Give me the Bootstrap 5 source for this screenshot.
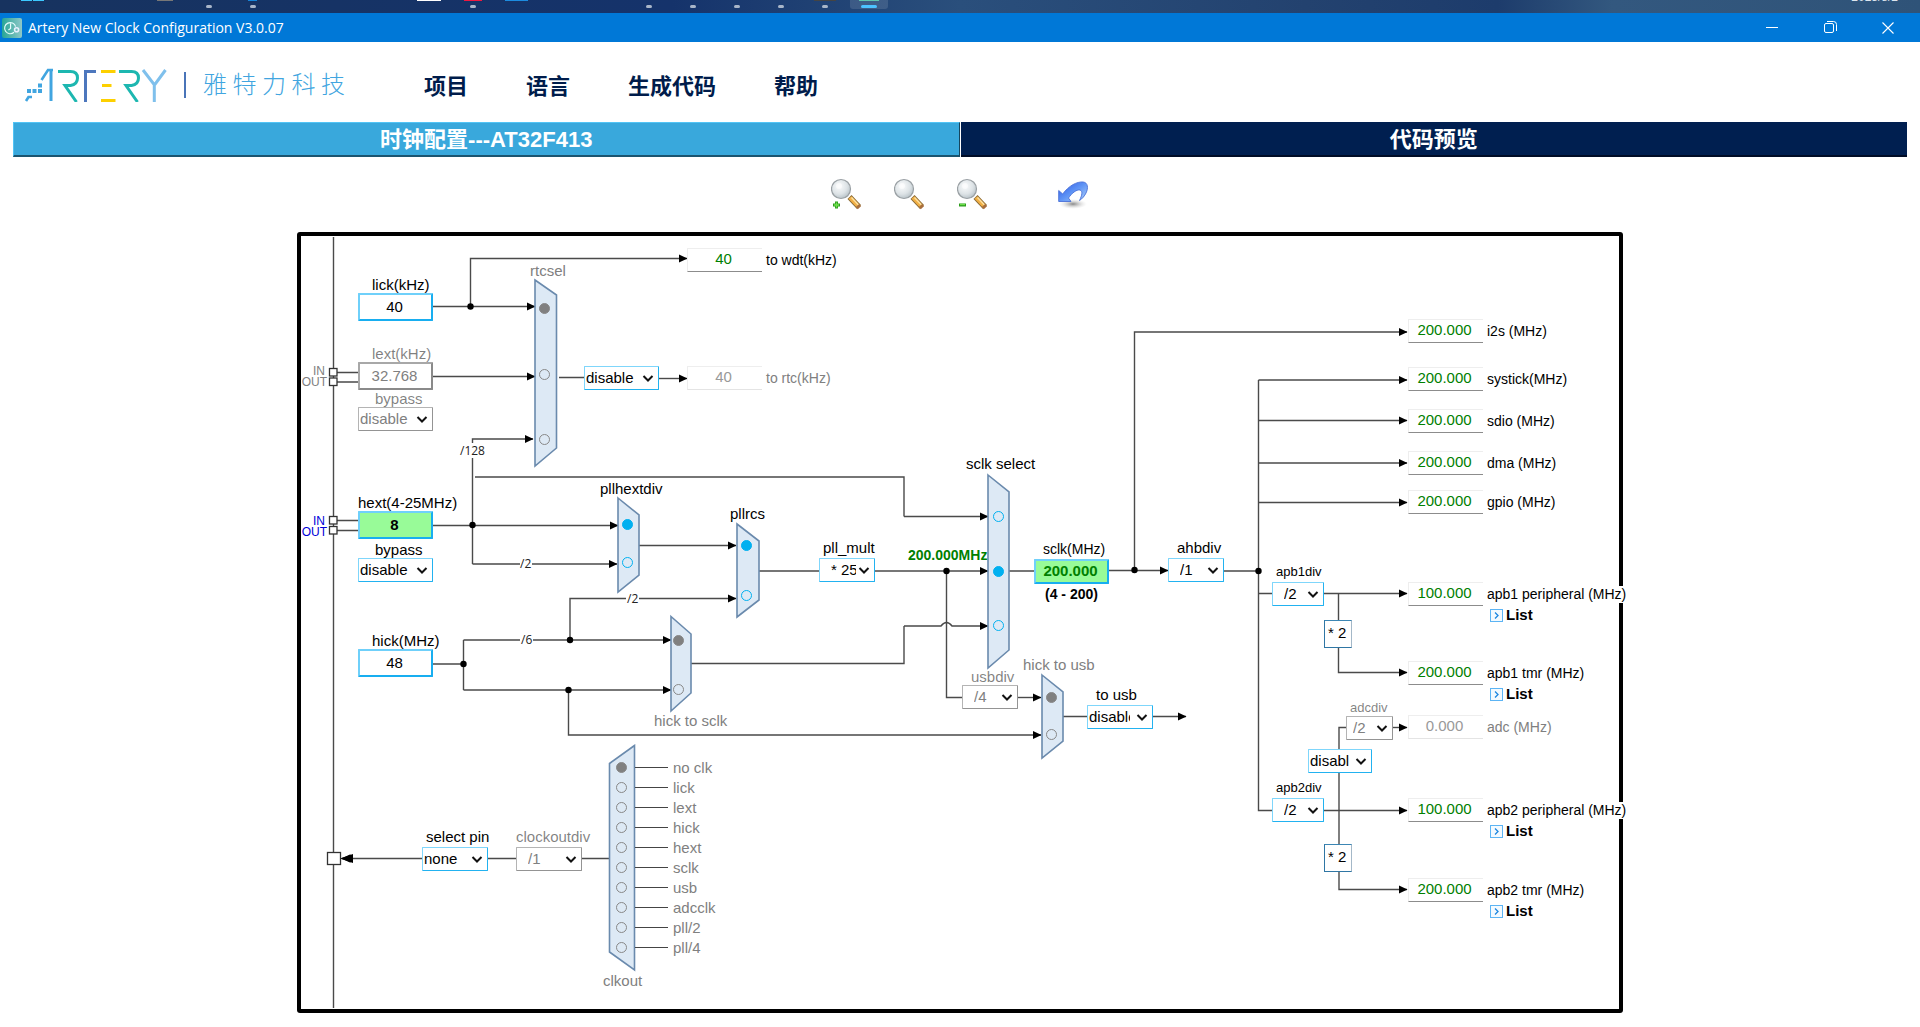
<!DOCTYPE html>
<html lang="zh-CN">
<head>
<meta charset="utf-8">
<meta name="viewport" content="width=device-width, initial-scale=1">
<title>Artery New Clock Configuration V3.0.07</title>
<link href="https://cdn.jsdelivr.net/npm/bootstrap@5.3.0/dist/css/bootstrap.min.css" rel="stylesheet">
<style>
  body { font-family: "Liberation Sans", "Noto Sans CJK SC", sans-serif; font-size: 15px; color: #000; background: #fff; }

  /* desktop strip and title bar */
  .desk-strip { height: 13px; background: linear-gradient(90deg, #17335f 0, #15336b 35%, #2a4f7c 50%, #23426f 68%, #1d3c6c 78%, #33587f 84%, #2f5378 100%); }
  .desk-date { font-size: 12px; line-height: 12px; margin-top: -9px; padding-right: 22px; color: #dde5ee; }
  .title-strip { height: 29px; background: #0078d7; color: #fff; padding: 0 3px 0 2px; }
  .title-text { font-family: "Open Sans", sans-serif; font-size: 14px; line-height: 20px; padding-left: 6px; }
  .win-btn { width: 58px; height: 29px; color: #fff; }

  /* menu */
  .menu-strip { height: 80px; padding: 6px 24px 0; }
  .brand-rule { width: 2px; height: 26px; background: #4a74b8; margin: 0 17px 0 16px; }
  .brand-name { width: 142px; font-size: 24px; line-height: 30px; font-weight: 300; color: #41a5e0; text-align-last: justify; }
  .menu-link { font-size: 22px; line-height: 32px; font-weight: 700; color: #001c4b; text-decoration: none; }
  .menu-list { gap: 58px; margin-left: 79px; padding-top: 4px; }

  /* tabs */
  .tab-strip { padding: 0 13px; gap: 1px; }
  .tab-btn { height: 35px; padding: 2px 0 0; font-size: 22px; line-height: 30px; font-weight: 700; color: #fff; border: 0; }
  .tab-on { background: #39a8dc; border-top: 1px solid #52c4f5; border-left: 1px solid #52c4f5; border-right: 1px solid #16465e; border-bottom: 2px solid #1b5570; }
  .tab-off { background: #001f50; border-bottom: 2px solid #000c26; }

  .tool-strip { height: 75px; gap: 33px; padding: 0 2px 2px 0; }
  .tool-btn { width: 30px; height: 32px; }
  .tool-undo { margin-left: 38px; }

  /* clock tree canvas */
  .clock-tree { width: 1326px; height: 781px; box-shadow: inset 0 0 0 4px #000; border-radius: 3px; }
  .wire { fill: none; stroke: #4a4a4a; stroke-width: 1.4; }
  .mux { fill: #dde9f5; stroke: #6a8aad; stroke-width: 1.6; }
  .pad-box { fill: #fff; stroke: #333; stroke-width: 1.3; }
  .cap { font-size: 15px; }
  .cap-off { fill: #808080; }
  .cap-pin { font-size: 12px; }
  .cap-ratio { font-family: "Open Sans", sans-serif; font-size: 12px; fill: #222; }
  .cap-freq { font-size: 14px; font-weight: 700; fill: #008000; }

  .node { position: absolute; display: flex; flex-direction: column; }
  .node > label { line-height: 20px; white-space: nowrap; }
  .node.tight > label { line-height: 16px; }
  .in-4 { padding-left: 4px; }
  .in-9 { padding-left: 9px; }
  .in-14 { padding-left: 14px; }
  .in-17 { padding-left: 17px; }
  .small-cap { font-size: 13px; }
  .mid-cap { font-size: 14px; }
  .w-a { width: 75px; } .w-b { width: 66px; } .w-c { width: 56px; } .w-d { width: 52px; } .w-e { width: 47px; } .w-f { width: 64px; }

  .freq-in { height: 28px; width: 75px; padding: 0 2px 2px 0; font-size: 15px; line-height: 20px; text-align: center; color: #000; background: #fff; border: 2px solid; border-color: #6fd0fa #18aef0 #18aef0 #6fd0fa; border-radius: 1px; }
  .freq-in.low { height: 25px; }
  .freq-in.lit { background: #98fb98; font-weight: 700; }
  .freq-in.off { color: #808080; border-color: #a8a8a8 #8a8a8a #8a8a8a #a8a8a8; }
  .freq-in.green { color: #008000; }

  .pick.form-select { height: 24px; width: 100%; padding: 0 22px 1px 1px; font-size: 15px; line-height: 20px; color: #000; text-overflow: clip; border: 1px solid; border-color: #7fd6fb #22b2f0 #22b2f0 #7fd6fb; border-radius: 1px; background-color: #fff; background-image: url("data:image/svg+xml,%3Csvg xmlns='http://www.w3.org/2000/svg' viewBox='0 0 12 12'%3E%3Cpath fill='none' stroke='%23111' stroke-width='2' d='M1.5 4l4.5 4.5L10.5 4'/%3E%3C/svg%3E"); background-repeat: no-repeat; background-position: right 4px center; background-size: 12px 12px; }
  .pick.form-select.pad-m { padding-left: 11px; padding-right: 18px; }
  .pick.form-select.pad-s { padding-left: 6px; padding-right: 18px; }
  .pick.form-select.off { color: #808080; border-color: #b4b4b4 #949494 #949494 #b4b4b4; opacity: 1; }

  .out-row { gap: 4px; }
  .out-val { width: 75px; height: 24px; padding: 0 3px 3px 0; font-size: 15px; line-height: 20px; text-align: center; color: #008000; background: #fff; border: 1px solid #eee; border-right: 0; border-bottom-color: #8c8c8c; border-radius: 0; }
  .out-name { font-size: 14px; line-height: 16px; padding-bottom: 1px; background: #fff; white-space: nowrap; }
  .out-off .out-val { color: #999; border-bottom-color: #e4e4e4; }
  .out-off .out-name { color: #808080; }
  .list-btn { height: 18px; margin-left: 82px; gap: 3px; font-size: 15px; line-height: 18px; font-weight: 700; color: #000; }

  .mult-box { width: 28px; height: 28px; font-size: 15px; line-height: 24px; padding-left: 3px; background: #fff; border: 1px solid; border-color: #3c86b4 #a4b8c8 #2f76a4 #2f76a4; white-space: nowrap; }

  .sel-dot { appearance: none; width: 11px; height: 11px; margin: 0; border: 1px solid #888; border-radius: 50%; background: transparent; flex: none; }
  .sel-dot:checked { background: #808080; }
  .sel-dot.hot { border-color: #00b0f0; }
  .sel-dot.hot:checked { background: #00b0f0; }
  .dot-stack { position: absolute; display: flex; flex-direction: column; justify-content: space-between; }

  .clk-list { left: 319px; top: 526px; }
  .clk-list label { display: flex; align-items: center; height: 20px; line-height: 18px; padding-bottom: 1px; color: #808080; }
  .clk-list .stub { width: 33px; height: 1px; margin: 0 5px 0 8px; background: #444; }

  /* places on the canvas */
  #n-lick { left: 61px; top: 45px; }
  #n-lext { left: 61px; top: 114px; }
  #n-lextby { left: 61px; top: 159px; }
  #n-hext { left: 61px; top: 263px; }
  #n-hextby { left: 61px; top: 310px; }
  #n-hick { left: 61px; top: 401px; }
  #n-rtc { left: 287px; top: 134px; }
  #n-mult { left: 522px; top: 306px; }
  #n-sclk { left: 737px; top: 307px; }
  #n-ahb { left: 871px; top: 306px; }
  #n-usb { left: 665px; top: 437px; }
  #n-tousb { left: 790px; top: 453px; }
  #n-pin { left: 125px; top: 595px; }
  #n-cko { left: 219px; top: 595px; }
  #n-apb1 { left: 975px; top: 330px; }
  #n-apb2 { left: 975px; top: 546px; }
  #n-adc { left: 1049px; top: 468px; }
  #n-adcen { left: 1011px; top: 517px; }
  #n-x1 { left: 1027px; top: 388px; }
  #n-x2 { left: 1027px; top: 612px; }
  #o-wdt { left: 390px; top: 16px; }
  #o-rtc { left: 390px; top: 134px; }
  #o-i2s, #o-sys, #o-sdio, #o-dma, #o-gpio, #o-p1, #o-t1, #o-adc, #o-p2, #o-t2 { left: 1111px; }
  #o-i2s { top: 87px; } #o-sys { top: 135px; } #o-sdio { top: 177px; } #o-dma { top: 219px; } #o-gpio { top: 258px; }
  #o-p1 { top: 350px; } #o-t1 { top: 429px; } #o-adc { top: 483px; } #o-p2 { top: 566px; } #o-t2 { top: 646px; }
  #d-rtc { left: 242px; top: 71px; height: 142px; }
  #d-phd { left: 325px; top: 287px; height: 49px; }
  #d-prc { left: 444px; top: 308px; height: 61px; }
  #d-sclk { left: 696px; top: 279px; height: 120px; }
  #d-h2s { left: 376px; top: 403px; height: 60px; }
  #d-h2u { left: 749px; top: 460px; height: 48px; }
</style>
<script src="https://cdn.jsdelivr.net/npm/bootstrap@5.3.0/dist/js/bootstrap.bundle.min.js"></script>
</head>
<body>

<div class="desk-strip d-flex justify-content-between overflow-hidden">
  <svg width="960" height="13" aria-hidden="true">
    <rect x="21" y="0" width="11" height="1" fill="#3cc8ff"/><rect x="33" y="0" width="11" height="1" fill="#3cc8ff"/>
    <rect x="157" y="0" width="16" height="1" fill="#777"/><rect x="248" y="0" width="9" height="1" fill="#1684d8"/>
    <rect x="417" y="0" width="24" height="1" fill="#fff"/><rect x="464" y="0" width="18" height="1" fill="#f01840"/>
    <rect x="505" y="0" width="23" height="1" fill="#1c8ce0"/>
    <rect x="850" y="-4" width="38" height="13" rx="3" fill="#fff" fill-opacity=".12"/>
    <rect x="814" y="0" width="22" height="1" fill="#444"/><rect x="859" y="0" width="20" height="1" fill="#5fc4ae"/>
    <g fill="#a9b6c9"><rect x="206" y="5" width="6" height="3" rx="1.5"/><rect x="250" y="5" width="6" height="3" rx="1.5"/><rect x="470" y="5" width="6" height="3" rx="1.5"/><rect x="646" y="5" width="6" height="3" rx="1.5"/><rect x="690" y="5" width="6" height="3" rx="1.5"/><rect x="734" y="5" width="6" height="3" rx="1.5"/><rect x="778" y="5" width="6" height="3" rx="1.5"/><rect x="822" y="5" width="6" height="3" rx="1.5"/></g>
    <rect x="861" y="5" width="16" height="3" rx="1.5" fill="#4cc2ff"/>
  </svg>
  <span class="desk-date">2023/8/2</span>
</div>

<header class="title-strip d-flex align-items-center">
  <svg width="20" height="20" viewBox="0 0 20 20" aria-hidden="true">
    <defs><linearGradient id="appg"><stop offset="0" stop-color="#27a596"/><stop offset="1" stop-color="#8fc8c8"/></linearGradient></defs>
    <rect width="20" height="20" rx="2" fill="url(#appg)"/>
    <path d="M12 14.3A5.6 5.6 0 1 1 13.6 8.6M8.6 5.5v5L6.4 12" fill="none" stroke="#e4fbfb" stroke-width="1.2"/>
    <circle cx="14.6" cy="11.8" r="2" fill="none" stroke="#e9f0ff" stroke-width="1.6"/>
  </svg>
  <span class="title-text flex-grow-1">Artery New Clock Configuration V3.0.07</span>
  <button class="win-btn btn p-0 border-0 rounded-0 d-flex align-items-center justify-content-center" aria-label="Minimize"><svg width="12" height="12"><path d="M0 5.5h12" stroke="#fff"/></svg></button>
  <button class="win-btn btn p-0 border-0 rounded-0 d-flex align-items-center justify-content-center" aria-label="Restore"><svg width="13" height="13" fill="none" stroke="#fff"><rect x=".5" y="2.5" width="9" height="9" rx="1.5"/><path d="M3 .5h6.500a3 3 0 0 1 3 3V10"/></svg></button>
  <button class="win-btn btn p-0 border-0 rounded-0 d-flex align-items-center justify-content-center" aria-label="Close"><svg width="12" height="12"><path d="M.5.5l11 11M11.500.5l-11 11" stroke="#fff" stroke-width="1.1"/></svg></button>
</header>

<nav class="menu-strip d-flex align-items-center">
  <svg width="144" height="34" viewBox="24 68 144 34" role="img" aria-label="ARTERY" fill="none" stroke-width="3">
    <path d="M51 71V101" stroke="#41a5e0"/><path d="M53 70h-5L41.500 80" stroke="#41a5e0" stroke-width="2.600"/>
    <path d="M26 101l2.500-4h3.500" stroke="#41a5e0" stroke-width="2.600"/>
    <g fill="#41a5e0"><rect x="27" y="89" width="4" height="4"/><rect x="32.500" y="89" width="4" height="4"/><rect x="38" y="89" width="4" height="4"/><rect x="38" y="83.500" width="4" height="4"/></g>
    <path d="M58 71.500h12.500q7 0 7 6.500t-7 7.500H65L76.500 102" stroke="#1db7b0"/>
    <path d="M85.500 102V71.500H96" stroke="#4d77bd"/>
    <path d="M101 71.500h14.500M102 85.500h9.500M101 100.500h14.500" stroke="#fdd000"/>
    <path d="M119 71.500h12.500q7 0 7 6.500t-7 7.500H126L137.500 102" stroke="#1db7b0"/>
    <path d="M143 70L154.500 85L165.500 70M154.300 84V102" stroke="#7fc0ec"/>
  </svg>
  <span class="brand-rule"></span>
  <span class="brand-name">雅特力科技</span>
  <div class="menu-list d-flex">
    <a class="menu-link" href="#">项目</a><a class="menu-link" href="#">语言</a><a class="menu-link" href="#">生成代码</a><a class="menu-link" href="#">帮助</a>
  </div>
</nav>

<div class="tab-strip d-flex" role="tablist">
  <button class="tab-btn tab-on flex-fill w-50" role="tab" aria-selected="true">时钟配置---AT32F413</button>
  <button class="tab-btn tab-off flex-fill w-50" role="tab" aria-selected="false">代码预览</button>
</div>

<svg width="0" height="0" class="position-absolute" aria-hidden="true">
  <defs>
    <radialGradient id="glass" cx=".4" cy=".35" r=".7"><stop offset="0" stop-color="#fbfcfd"/><stop offset=".6" stop-color="#dde3e6"/><stop offset="1" stop-color="#b4bfc5"/></radialGradient>
    <linearGradient id="arrowg" x1="0" y1="0" x2="1" y2="1"><stop offset="0" stop-color="#2a55e6"/><stop offset=".5" stop-color="#5f94f5"/><stop offset="1" stop-color="#b4d4fa"/></linearGradient>
    <radialGradient id="shade"><stop offset="0" stop-color="#888"/><stop offset="1" stop-color="#ddd" stop-opacity="0"/></radialGradient>
    <symbol id="lens" viewBox="0 0 30 32">
      <path d="M18.500 19l9.500 10" stroke="#8a6a35" stroke-width="5.600"/><path d="M19 19.500l8.500 9" stroke="#f2b045" stroke-width="4"/><path d="M20.500 19.500l7 7.500" stroke="#fde2a4" stroke-width="1.300"/><path d="M26.500 27.500l2 2.200" stroke="#a86e3c" stroke-width="4.500"/>
      <circle cx="10" cy="11" r="9.500" fill="url(#glass)" stroke="#9aa0a4" stroke-width="1.200"/><circle cx="8" cy="8" r="3" fill="#fff" opacity=".55"/>
    </symbol>
  </defs>
</svg>
<div class="tool-strip d-flex justify-content-center align-items-center">
  <button class="tool-btn btn p-0 border-0 d-flex" aria-label="Zoom in"><svg width="30" height="32"><use href="#lens" width="30" height="32"/><path d="M5.500 23.500v7M2 27h7" stroke="#2c9c1c" stroke-width="3"/><path d="M5.500 24.500v5M3 27h5" stroke="#6ee04c" stroke-width="1.400"/></svg></button>
  <button class="tool-btn btn p-0 border-0 d-flex" aria-label="Zoom reset"><svg width="30" height="32"><use href="#lens" width="30" height="32"/></svg></button>
  <button class="tool-btn btn p-0 border-0 d-flex" aria-label="Zoom out"><svg width="30" height="32"><use href="#lens" width="30" height="32"/><path d="M2 27h7" stroke="#2c9c1c" stroke-width="3"/><path d="M3 26.500h5" stroke="#6ee04c" stroke-width="1.400"/></svg></button>
  <button class="tool-btn tool-undo btn p-0 border-0 d-flex" aria-label="Undo"><svg width="30" height="32" viewBox="0 0 30 32"><ellipse cx="15" cy="26" rx="14" ry="5" fill="url(#shade)"/><path d="M.7 12.500l4 3.500C11 7.500 19 3.500 25 4c5 .5 5.500 6 3 11-1.500 3-3.500 5.500-6.500 7.500C24 17.500 25 13 22 12c-3.500-.8-8.500 3.500-11.500 8L13 23.500H.7z" fill="url(#arrowg)" stroke="#4a70d8" stroke-width=".9"/></svg></button>
</div>

<main class="clock-tree position-relative mx-auto">
  <!-- wires, multiplexers and captions -->
  <svg class="d-block" width="1326" height="781" viewBox="297 232 1326 781">
    <defs><marker id="tip" viewBox="0 0 9 9" refX="8.500" refY="4.500" markerWidth="9" markerHeight="9" markerUnits="userSpaceOnUse" orient="auto"><path d="M0 .3L9 4.500L0 8.700z" fill="#000"/></marker></defs>
    <g class="wire">
      <path d="M333.500 237V1008M337 372.500H358M337 382H358M337 520.500H358M337 530.500H358"/>
      <path d="M559 377.500H584M472.500 458V564M475 477H904V516.500M472.500 564H520M463.500 640V690M463.500 640H520M433 664H463.500"/>
      <path d="M759 571H819M691 663.500H904V626M946.500 571V697.500H962M1009 571H1034M1224 571H1258.500M1258.500 380V810.500H1272M1258.500 593.500H1272"/>
      <path d="M1063 716.500H1087M582 858.500H610M488 858.500H516M1338.500 593.500V620M1339 750V727.500H1346M1339 772V844M570 640V598.500H626"/>
      <g marker-end="url(#tip)">
        <path d="M433 306.500H535"/><path d="M470.500 306.500V258.500H687"/><path d="M433 376.500H535"/><path d="M659 378.500H687"/>
        <path d="M472.500 443V439H533"/><path d="M904 516.500H988"/><path d="M433 525.500H618"/><path d="M532 564H617"/>
        <path d="M639 545.500H736"/><path d="M639 598.500H736"/><path d="M875 571H988"/><path d="M904 626H941Q946.500 619 952 626H988"/>
        <path d="M533 640H671"/><path d="M463.500 690H671"/><path d="M568.500 690V735H1041"/><path d="M1018 697.500H1041"/><path d="M1153 716.500H1186"/>
        <path d="M1109 570.500H1168"/><path d="M1134.500 570V332H1407"/><path d="M1258.500 380H1407"/><path d="M1258.500 420.500H1407"/><path d="M1258.500 463H1407"/><path d="M1258.500 502.500H1407"/>
        <path d="M1323 593.500H1407"/><path d="M1338.500 648V672.500H1407"/><path d="M1393 727.500H1407"/><path d="M1323 810.500H1407"/><path d="M1339 871V889.500H1407"/>
        <path d="M422 858.500H342"/>
      </g>
    </g>
    <path d="M340 858.500l13-4.500v9z"/>
    <g fill="#000"><circle cx="470.500" cy="306.500" r="3.200"/><circle cx="472.500" cy="525" r="3.200"/><circle cx="463.500" cy="664" r="3.200"/><circle cx="570" cy="640" r="3.200"/><circle cx="568.500" cy="690" r="3.200"/><circle cx="946.500" cy="571" r="3.200"/><circle cx="1134.500" cy="570" r="3.200"/><circle cx="1258.500" cy="571" r="3.200"/></g>
    <g class="pad-box"><rect x="329.500" y="368.500" width="7.500" height="7.500"/><rect x="329.500" y="378" width="7.500" height="7.500"/><rect x="329.500" y="516.500" width="7.500" height="7.500"/><rect x="329.500" y="526.500" width="7.500" height="7.500"/><rect x="327.500" y="852.500" width="13" height="12"/></g>
    <g class="mux">
      <path d="M535 280L556.500 295V448L535 466z"/><path d="M618 498L639 515V575L618 592z"/><path d="M737 524L759 541V600L737 617z"/>
      <path d="M988 475L1009 492V650L988 668z"/><path d="M671 616.500L691 634V693L671 711z"/><path d="M1042 675L1063 692V741L1042 758z"/>
      <path d="M634.500 745.500L609.500 763.500V952L634.500 970z"/>
    </g>
    <g class="cap">
      <text class="cap-off" x="530" y="276">rtcsel</text><text x="600" y="494">pllhextdiv</text><text x="730" y="519">pllrcs</text><text x="966" y="469">sclk select</text>
      <text class="cap-off" x="654" y="726">hick to sclk</text><text class="cap-off" x="1023" y="670">hick to usb</text><text class="cap-off" x="603" y="986">clkout</text>
    </g>
    <text class="cap-freq" x="908" y="560">200.000MHz</text>
    <g class="cap-pin" text-anchor="end"><text class="cap-off" x="325" y="375">IN</text><text class="cap-off" x="327" y="386">OUT</text><text fill="#0000d8" x="325" y="525">IN</text><text fill="#0000d8" x="327" y="536">OUT</text></g>
    <g class="cap-ratio"><text x="460" y="455">/128</text><text x="520" y="568">/2</text><text x="627" y="603">/2</text><text x="521" y="644">/6</text></g>
  </svg>

  <!-- sources -->
  <div class="node tight" id="n-lick"><label class="in-14" for="lick">lick(kHz)</label><input class="freq-in" id="lick" value="40"></div>
  <div class="node tight" id="n-lext"><label class="in-14 text-black-50" for="lext">lext(kHz)</label><input class="freq-in off" id="lext" value="32.768" disabled></div>
  <div class="node tight w-a" id="n-lextby"><label class="in-17 text-black-50" for="lextby">bypass</label><select class="pick form-select off" id="lextby" disabled><option>disable</option><option>enable</option></select></div>
  <div class="node tight" id="n-hext"><label for="hext">hext(4-25MHz)</label><input class="freq-in lit" id="hext" value="8"></div>
  <div class="node tight w-a" id="n-hextby"><label class="in-17" for="hextby">bypass</label><select class="pick form-select" id="hextby"><option>disable</option><option>enable</option></select></div>
  <div class="node tight" id="n-hick"><label class="in-14" for="hick">hick(MHz)</label><input class="freq-in" id="hick" value="48"></div>

  <!-- dividers and switches -->
  <div class="node w-a" id="n-rtc"><select class="pick form-select" aria-label="rtc"><option>disable</option><option>enable</option></select></div>
  <div class="node w-c" id="n-mult"><label class="in-4" for="mult">pll_mult</label><select class="pick form-select pad-m" id="mult"><option>* 25</option></select></div>
  <div class="node w-a" id="n-sclk"><label class="in-9 mid-cap" for="sclk">sclk(MHz)</label><input class="freq-in low lit green" id="sclk" value="200.000"><label class="mid-cap fw-bold text-center" for="sclk">(4 - 200)</label></div>
  <div class="node w-c" id="n-ahb"><label class="in-9" for="ahb">ahbdiv</label><select class="pick form-select pad-m" id="ahb"><option>/1</option></select></div>
  <div class="node tight w-c" id="n-usb"><label class="in-9 text-black-50" for="usb">usbdiv</label><select class="pick form-select pad-m off" id="usb" disabled><option>/4</option></select></div>
  <div class="node w-b" id="n-tousb"><label class="in-9" for="tousb">to usb</label><select class="pick form-select" id="tousb"><option>disable</option></select></div>
  <div class="node w-b" id="n-pin"><label class="in-4" for="pin">select pin</label><select class="pick form-select" id="pin"><option>none</option></select></div>
  <div class="node w-b" id="n-cko"><label class="text-black-50" for="cko">clockoutdiv</label><select class="pick form-select pad-m off" id="cko" disabled><option>/1</option></select></div>
  <div class="node w-d" id="n-apb1"><label class="in-4 small-cap" for="apb1">apb1div</label><select class="pick form-select pad-m" id="apb1"><option>/2</option></select></div>
  <div class="node w-d" id="n-apb2"><label class="in-4 small-cap" for="apb2">apb2div</label><select class="pick form-select pad-m" id="apb2"><option>/2</option></select></div>
  <div class="node tight w-e" id="n-adc"><label class="in-4 small-cap text-black-50" for="adc">adcdiv</label><select class="pick form-select pad-s off" id="adc" disabled><option>/2</option></select></div>
  <div class="node w-f" id="n-adcen"><select class="pick form-select" aria-label="adc"><option>disable</option></select></div>
  <div class="node mult-box" id="n-x1">* 2</div>
  <div class="node mult-box" id="n-x2">* 2</div>

  <!-- outputs -->
  <div class="node" id="o-wdt"><div class="out-row d-flex align-items-center"><input class="out-val" id="v-wdt" value="40" readonly><label class="out-name" for="v-wdt">to wdt(kHz)</label></div></div>
  <div class="node out-off" id="o-rtc"><div class="out-row d-flex align-items-center"><input class="out-val" id="v-rtc" value="40" readonly><label class="out-name" for="v-rtc">to rtc(kHz)</label></div></div>
  <div class="node" id="o-i2s"><div class="out-row d-flex align-items-center"><input class="out-val" id="v-i2s" value="200.000" readonly><label class="out-name" for="v-i2s">i2s (MHz)</label></div></div>
  <div class="node" id="o-sys"><div class="out-row d-flex align-items-center"><input class="out-val" id="v-sys" value="200.000" readonly><label class="out-name" for="v-sys">systick(MHz)</label></div></div>
  <div class="node" id="o-sdio"><div class="out-row d-flex align-items-center"><input class="out-val" id="v-sdio" value="200.000" readonly><label class="out-name" for="v-sdio">sdio (MHz)</label></div></div>
  <div class="node" id="o-dma"><div class="out-row d-flex align-items-center"><input class="out-val" id="v-dma" value="200.000" readonly><label class="out-name" for="v-dma">dma (MHz)</label></div></div>
  <div class="node" id="o-gpio"><div class="out-row d-flex align-items-center"><input class="out-val" id="v-gpio" value="200.000" readonly><label class="out-name" for="v-gpio">gpio (MHz)</label></div></div>
  <div class="node" id="o-p1"><div class="out-row d-flex align-items-center"><input class="out-val" id="v-p1" value="100.000" readonly><label class="out-name" for="v-p1">apb1 peripheral (MHz)</label></div>
    <button class="list-btn btn p-0 border-0 d-flex align-items-center"><svg width="13" height="13" fill="none"><rect x=".5" y=".5" width="12" height="12" fill="#f3faff" stroke="#5cb4f4"/><path d="M5 3.500l3 3-3 3" stroke="#1c86e0" stroke-width="1.300"/></svg>List</button></div>
  <div class="node" id="o-t1"><div class="out-row d-flex align-items-center"><input class="out-val" id="v-t1" value="200.000" readonly><label class="out-name" for="v-t1">apb1 tmr (MHz)</label></div>
    <button class="list-btn btn p-0 border-0 d-flex align-items-center"><svg width="13" height="13" fill="none"><rect x=".5" y=".5" width="12" height="12" fill="#f3faff" stroke="#5cb4f4"/><path d="M5 3.500l3 3-3 3" stroke="#1c86e0" stroke-width="1.300"/></svg>List</button></div>
  <div class="node out-off" id="o-adc"><div class="out-row d-flex align-items-center"><input class="out-val" id="v-adc" value="0.000" readonly><label class="out-name" for="v-adc">adc (MHz)</label></div></div>
  <div class="node" id="o-p2"><div class="out-row d-flex align-items-center"><input class="out-val" id="v-p2" value="100.000" readonly><label class="out-name" for="v-p2">apb2 peripheral (MHz)</label></div>
    <button class="list-btn btn p-0 border-0 d-flex align-items-center"><svg width="13" height="13" fill="none"><rect x=".5" y=".5" width="12" height="12" fill="#f3faff" stroke="#5cb4f4"/><path d="M5 3.500l3 3-3 3" stroke="#1c86e0" stroke-width="1.300"/></svg>List</button></div>
  <div class="node" id="o-t2"><div class="out-row d-flex align-items-center"><input class="out-val" id="v-t2" value="200.000" readonly><label class="out-name" for="v-t2">apb2 tmr (MHz)</label></div>
    <button class="list-btn btn p-0 border-0 d-flex align-items-center"><svg width="13" height="13" fill="none"><rect x=".5" y=".5" width="12" height="12" fill="#f3faff" stroke="#5cb4f4"/><path d="M5 3.500l3 3-3 3" stroke="#1c86e0" stroke-width="1.300"/></svg>List</button></div>

  <!-- multiplexer inputs -->
  <div class="dot-stack" id="d-rtc"><input class="sel-dot" type="radio" name="rtcsel" aria-label="lick" checked><input class="sel-dot" type="radio" name="rtcsel" aria-label="lext"><input class="sel-dot" type="radio" name="rtcsel" aria-label="hext/128"></div>
  <div class="dot-stack" id="d-phd"><input class="sel-dot hot" type="radio" name="phd" aria-label="hext" checked><input class="sel-dot hot" type="radio" name="phd" aria-label="hext/2"></div>
  <div class="dot-stack" id="d-prc"><input class="sel-dot hot" type="radio" name="prc" aria-label="hext" checked><input class="sel-dot hot" type="radio" name="prc" aria-label="hick"></div>
  <div class="dot-stack" id="d-sclk"><input class="sel-dot hot" type="radio" name="ssel" aria-label="hext"><input class="sel-dot hot" type="radio" name="ssel" aria-label="pll" checked><input class="sel-dot hot" type="radio" name="ssel" aria-label="hick"></div>
  <div class="dot-stack" id="d-h2s"><input class="sel-dot" type="radio" name="h2s" aria-label="hick/6" checked><input class="sel-dot" type="radio" name="h2s" aria-label="hick"></div>
  <div class="dot-stack" id="d-h2u"><input class="sel-dot" type="radio" name="h2u" aria-label="pll" checked><input class="sel-dot" type="radio" name="h2u" aria-label="hick"></div>

  <div class="clk-list position-absolute">
    <label><input class="sel-dot" type="radio" name="clkout" checked><span class="stub"></span>no clk</label>
    <label><input class="sel-dot" type="radio" name="clkout"><span class="stub"></span>lick</label>
    <label><input class="sel-dot" type="radio" name="clkout"><span class="stub"></span>lext</label>
    <label><input class="sel-dot" type="radio" name="clkout"><span class="stub"></span>hick</label>
    <label><input class="sel-dot" type="radio" name="clkout"><span class="stub"></span>hext</label>
    <label><input class="sel-dot" type="radio" name="clkout"><span class="stub"></span>sclk</label>
    <label><input class="sel-dot" type="radio" name="clkout"><span class="stub"></span>usb</label>
    <label><input class="sel-dot" type="radio" name="clkout"><span class="stub"></span>adcclk</label>
    <label><input class="sel-dot" type="radio" name="clkout"><span class="stub"></span>pll/2</label>
    <label><input class="sel-dot" type="radio" name="clkout"><span class="stub"></span>pll/4</label>
  </div>
</main>
</body>
</html>
